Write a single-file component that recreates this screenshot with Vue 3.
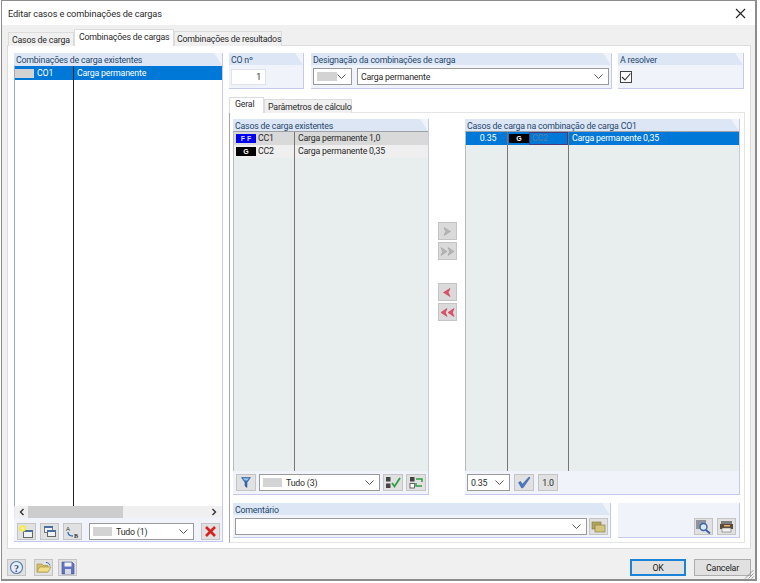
<script setup>
const existing = [
  { badge: 'F F', badgeClass: 'blue', id: 'CC1', name: 'Carga permanente 1,0', rowClass: 'row-a' },
  { badge: 'G', badgeClass: 'black', id: 'CC2', name: 'Carga permanente 0,35', rowClass: 'row-b' },
]
</script>

<template>
  <div class="dialog">
    <div class="titlebar">
      <span>Editar casos e combinações de cargas</span>
      <svg class="close" width="11" height="11" viewBox="0 0 11 11"><path d="M1 1l9 9M10 1l-9 9" stroke="#222" stroke-width="1.1" fill="none"/></svg>
    </div>

    <div class="content">
      <div class="tabs">
        <div class="tab tab-first">Casos de carga</div>
        <div class="tab active">Combinações de cargas</div>
        <div class="tab tab-last">Combinações de resultados</div>
      </div>

      <div class="panel">
        <section class="group left-group">
          <div class="group-head">Combinações de carga existentes</div>
          <div class="list white-list">
            <div class="col col-co">
              <div class="cell sel co-cell"><i class="swatch"></i>CO1</div>
            </div>
            <div class="col col-fill">
              <div class="cell sel">Carga permanente</div>
            </div>
          </div>
          <div class="scrollbar">
            <svg width="6" height="8" viewBox="0 0 6 8"><path d="M4.5 1L1.5 4l3 3" stroke="#333" stroke-width="1.4" fill="none"/></svg>
            <div class="track"><div class="thumb"></div></div>
            <svg width="6" height="8" viewBox="0 0 6 8"><path d="M1.5 1l3 3-3 3" stroke="#333" stroke-width="1.4" fill="none"/></svg>
          </div>
          <div class="toolbar left-tools">
            <button class="btn">
              <svg width="15" height="14" viewBox="0 0 15 14"><rect x="4.500" y="5.500" width="9" height="7" fill="#eef3f8" stroke="#666"/><rect x="4" y="5" width="10" height="2" fill="#4a6f9c"/><circle cx="3.500" cy="3.500" r="3.200" fill="#ffe93a"/><circle cx="3.500" cy="3.500" r="1.400" fill="#fff8b0"/></svg>
            </button>
            <button class="btn">
              <svg width="14" height="13" viewBox="0 0 14 13"><rect x="1.500" y="1.500" width="8" height="6" fill="#eef3f8" stroke="#777"/><rect x="1" y="1" width="9" height="2" fill="#4a6f9c"/><rect x="4.500" y="5.500" width="8" height="6" fill="#eef3f8" stroke="#666"/><rect x="4" y="5" width="9" height="2" fill="#4a6f9c"/></svg>
            </button>
            <button class="btn">
              <svg width="15" height="14" viewBox="0 0 15 14"><text x="1" y="6" font-size="6" font-family="Liberation Sans" fill="#333">A</text><text x="9" y="13" font-size="6" font-weight="700" font-family="Liberation Serif" fill="#333">B</text><path d="M3 7c0 3 2 4 5 4" stroke="#2d6db5" stroke-width="1.3" fill="none"/></svg>
            </button>
            <div class="combo combo-all-left"><i class="swatch wide"></i><span>Tudo (1)</span><svg class="chev" width="9" height="5" viewBox="0 0 9 5"><path d="M.5.5l4 4 4-4" stroke="#555" fill="none"/></svg></div>
            <button class="btn btn-del">
              <svg width="13" height="13" viewBox="0 0 13 13"><path d="M2 2l9 9M11 2l-9 9" stroke="#d62020" stroke-width="2.6" fill="none"/></svg>
            </button>
          </div>
        </section>

        <div class="right">
          <div class="top-row">
            <section class="group g-co">
              <div class="group-head">CO nº</div>
              <div class="group-body"><div class="input-no">1</div></div>
            </section>
            <section class="group g-name">
              <div class="group-head">Designação da combinações de carga</div>
              <div class="group-body">
                <div class="combo combo-swatch"><i class="swatch wide"></i><svg class="chev" width="9" height="5" viewBox="0 0 9 5"><path d="M.5.5l4 4 4-4" stroke="#555" fill="none"/></svg></div>
                <div class="combo combo-name"><span>Carga permanente</span><svg class="chev" width="9" height="5" viewBox="0 0 9 5"><path d="M.5.5l4 4 4-4" stroke="#555" fill="none"/></svg></div>
              </div>
            </section>
            <section class="group g-solve">
              <div class="group-head">A resolver</div>
              <div class="group-body">
                <div class="check"><svg width="10" height="10" viewBox="0 0 10 10"><path d="M1 5l3 3 5.500-6.500" stroke="#333" stroke-width="1.1" fill="none"/></svg></div>
              </div>
            </section>
          </div>

          <div class="inner-tabs">
            <div class="tab active inner-active">Geral</div>
            <div class="tab inner-second">Parâmetros de cálculo</div>
          </div>

          <div class="inner-panel">
            <div class="lists-row">
              <section class="group g-existing">
                <div class="group-head">Casos de carga existentes</div>
                <div class="list">
                  <div class="col col-cc">
                    <div v-for="r in existing" :key="r.id" class="cell" :class="r.rowClass"><i class="badge" :class="r.badgeClass">{{ r.badge }}</i>{{ r.id }}</div>
                  </div>
                  <div class="col col-fill">
                    <div v-for="r in existing" :key="r.id" class="cell" :class="r.rowClass">{{ r.name }}</div>
                  </div>
                </div>
                <div class="toolbar list-tools">
                  <button class="btn">
                    <svg width="10" height="11" viewBox="0 0 10 11"><path d="M.5.500h9L6 5.500v5L4 9V5.500z" fill="#2f6fb8" stroke="#1d4f8c" stroke-width=".5"/><path d="M2 1.200h6L6.400 3.500H3.600z" fill="#9cc4ea"/></svg>
                  </button>
                  <div class="combo combo-all"><i class="swatch wide"></i><span>Tudo (3)</span><svg class="chev" width="9" height="5" viewBox="0 0 9 5"><path d="M.5.5l4 4 4-4" stroke="#555" fill="none"/></svg></div>
                  <button class="btn">
                    <svg width="16" height="13" viewBox="0 0 16 13"><rect x="1" y="1" width="4.500" height="4.500" fill="#444"/><rect x="1" y="7.500" width="4.500" height="4.500" fill="#444"/><path d="M7 7l2.500 3.500L15 2" stroke="#2ea043" stroke-width="1.800" fill="none"/></svg>
                  </button>
                  <button class="btn">
                    <svg width="15" height="13" viewBox="0 0 15 13"><rect x="1" y="1" width="4.500" height="4.500" fill="#444"/><rect x="1" y="7.500" width="4.500" height="4.500" fill="#fff" stroke="#444" stroke-width=".8"/><path d="M7 3h6v3M13 10H7V7" stroke="#2ea043" stroke-width="1.500" fill="none"/></svg>
                  </button>
                </div>
              </section>

              <div class="transfer">
                <button class="btn arrow">
                  <svg width="10" height="9" viewBox="0 0 10 9"><path d="M2 .5l6.500 4-6.500 4 1.800-4z" fill="#b5b5b5" stroke="#9a9a9a" stroke-width=".5"/></svg>
                </button>
                <button class="btn arrow">
                  <svg width="15" height="9" viewBox="0 0 15 9"><path d="M1 .5l6 4-6 4 1.600-4zM8 .5l6 4-6 4 1.600-4z" fill="#b5b5b5" stroke="#9a9a9a" stroke-width=".5"/></svg>
                </button>
                <button class="btn arrow arrow-gap">
                  <svg width="10" height="9" viewBox="0 0 10 9"><path d="M8 .5L1.500 4.500l6.500 4-1.800-4z" fill="#e2506a" stroke="#c02a48" stroke-width=".5"/></svg>
                </button>
                <button class="btn arrow">
                  <svg width="15" height="9" viewBox="0 0 15 9"><path d="M7 .5l-6 4 6 4-1.600-4zM14 .5l-6 4 6 4-1.600-4z" fill="#e2506a" stroke="#c02a48" stroke-width=".5"/></svg>
                </button>
              </div>

              <section class="group g-used">
                <div class="group-head">Casos de carga na combinação de carga CO1</div>
                <div class="list">
                  <div class="col col-factor"><div class="cell sel factor">0.35</div></div>
                  <div class="col col-case">
                    <div class="cell sel case-cell"><i class="badge black small">G</i><span class="cc-edit">CC2</span></div>
                  </div>
                  <div class="col col-fill"><div class="cell sel">Carga permanente 0,35</div></div>
                </div>
                <div class="toolbar used-tools">
                  <div class="combo combo-factor"><span>0.35</span><svg class="chev" width="9" height="5" viewBox="0 0 9 5"><path d="M.5.5l4 4 4-4" stroke="#555" fill="none"/></svg></div>
                  <button class="btn">
                    <svg width="14" height="13" viewBox="0 0 14 13"><path d="M1.500 6.500l2-1 2 2.800L12 1l1 .8-7 10H4.500z" fill="#4a78c8" stroke="#27508f" stroke-width=".5"/></svg>
                  </button>
                  <button class="btn">1.0</button>
                </div>
              </section>
            </div>

            <div class="comment-row">
              <section class="group g-comment">
                <div class="group-head">Comentário</div>
                <div class="group-body">
                  <div class="combo combo-comment"><svg class="chev" width="9" height="5" viewBox="0 0 9 5"><path d="M.5.5l4 4 4-4" stroke="#555" fill="none"/></svg></div>
                  <button class="btn">
                    <svg width="15" height="12" viewBox="0 0 15 12"><rect x="1" y="1" width="9" height="7" fill="#b4a55c" stroke="#7e7440" stroke-width=".6"/><rect x="4" y="4" width="10" height="7" fill="#d3c67c" stroke="#7e7440" stroke-width=".6"/></svg>
                  </button>
                </div>
              </section>
              <section class="g-actions">
                <button class="btn">
                  <svg width="15" height="14" viewBox="0 0 15 14"><rect x="0" y="0" width="10" height="9" fill="#8f949c"/><circle cx="7.500" cy="7" r="3.500" fill="#dbe7f3" stroke="#3c63a8" stroke-width="1.400"/><path d="M10 10l4 3.500" stroke="#3c63a8" stroke-width="2"/></svg>
                </button>
                <button class="btn">
                  <svg width="15" height="13" viewBox="0 0 15 13"><rect x="2" y="1" width="11" height="3" fill="#7d7d7d"/><rect x="1" y="4" width="13" height="5" fill="#5a4a3e"/><rect x="3" y="8" width="9" height="4" fill="#f2f2f2" stroke="#555" stroke-width=".5"/><rect x="5" y="5" width="6" height="1.500" fill="#e3b36a"/></svg>
                </button>
              </section>
            </div>
          </div>
        </div>
      </div>

      <div class="footer">
        <button class="btn">
          <svg width="15" height="15" viewBox="0 0 15 15"><circle cx="7.500" cy="7.500" r="6" fill="#e8eef8" stroke="#5d7fb5" stroke-width="1.200"/><text x="7.500" y="11.500" text-anchor="middle" font-size="10" font-weight="700" font-family="Liberation Serif" fill="#2c4a86">?</text></svg>
        </button>
        <button class="btn btn-open">
          <svg width="16" height="13" viewBox="0 0 16 13"><path d="M1 3h5l1 1.500h5V11H1z" fill="#d8c065" stroke="#a08c3a" stroke-width=".6"/><path d="M1 11l2.500-5H15l-3 5z" fill="#f1dd86" stroke="#a08c3a" stroke-width=".6"/><path d="M10 1.500c2 0 3.500 1 4 3" stroke="#3c63a8" fill="none"/></svg>
        </button>
        <button class="btn">
          <svg width="14" height="14" viewBox="0 0 14 14"><path d="M1 1h10l2 2v10H1z" fill="#6274c0" stroke="#3f4f90" stroke-width=".6"/><rect x="3.500" y="1.500" width="7" height="4" fill="#f2f2f2"/><rect x="4" y="8" width="6" height="5" fill="#d8dbe6"/></svg>
        </button>
        <div class="spacer"></div>
        <button class="dlg-btn ok">OK</button>
        <button class="dlg-btn">Cancelar</button>
        <svg class="grip" width="10" height="10" viewBox="0 0 10 10"><path d="M9.500 1L1 9.500M9.500 4.500L4.500 9.500M9.500 7.500L7.500 9.500" stroke="#999" fill="none"/></svg>
      </div>
    </div>
  </div>
</template>

<style scoped>
.dialog {
  box-sizing: border-box;
  width: 756px;
  height: 581px;
  margin-left: 1px;
  border: 1px solid #8c8c8c;
  border-width: 1px 2px 2px 1px;
  display: flex;
  flex-direction: column;
  font-family: Roboto, "Liberation Sans", Arial, sans-serif;
  font-size: 8.8px;
  letter-spacing: -.2px;
  color: #2a2a2a;
  background: #f0f0f0;
}

.titlebar {
  height: 24px;
  flex: none;
  background: #fff;
  display: flex;
  align-items: center;
  justify-content: space-between;
  padding: 0 6px 0 6px;
  font-size: 9.2px;
  letter-spacing: -.1px;
}

.close {
  margin-right: 3px;
}

.content {
  flex: 1;
  display: flex;
  flex-direction: column;
  padding: 5px 4px 0 5px;
  min-height: 0;
}

.tabs {
  display: flex;
  align-items: flex-end;
  height: 16px;
  flex: none;
  position: relative;
  z-index: 1;
  margin-bottom: -1px;
}

.tab {
  box-sizing: border-box;
  height: 14px;
  line-height: 14px;
  padding: 0 3px;
  background: #f0f0f0;
  border: 1px solid #dcdcdc;
  border-bottom: 0;
  white-space: nowrap;
}

.tab.active {
  background: #fff;
  height: 17px;
  line-height: 15px;
  padding: 0 4px;
}

.tab-first {
  width: 66px;
  margin-left: 1px;
}

.tabs .active {
  width: 100px;
}

.tab-last {
  width: 108px;
  height: 15px;
  padding-left: 2px;
}

.panel {
  flex: 1;
  min-height: 0;
  background: #fff;
  border: 1px solid #dcdcdc;
  padding: 7px 6px 6px 6px;
  display: flex;
  gap: 6px;
}

.group {
  background: #f0f4fa;
  border-right: 1px solid #c6c8ee;
  border-bottom: 1px solid #c6c8ee;
  display: flex;
  flex-direction: column;
  box-sizing: border-box;
}

.group-head {
  height: 12px;
  line-height: 14px;
  flex: none;
  padding-left: 2px;
  background: #dce6f4;
  color: #26476e;
  white-space: nowrap;
  clip-path: polygon(0 0, calc(100% - 8px) 0, 100% 100%, 0 100%);
}

.group-body {
  flex: 1;
  display: flex;
  align-items: center;
  gap: 5px;
  padding: 0 2px;
}

.left-group {
  width: 209px;
  flex: none;
}

.list {
  flex: 1;
  min-height: 0;
  display: flex;
  background: #e8eeee;
  border-left: 1px solid #b8bcc0;
  border-top: 1px solid #9da2a8;
}

.white-list {
  background: #fff;
  border-top: 1px solid #dce6f4;
  border-left: 1px solid #9ea8c0;
}

.col {
  border-right: 1px solid #777;
  box-sizing: border-box;
  flex: none;
}

.col-fill {
  flex: 1;
  border-right: 0;
  min-width: 0;
}

.col-co {
  width: 59px;
  border-right-color: #222;
}

.col-cc {
  width: 61px;
}

.col-factor {
  width: 42px;
}

.col-case {
  width: 61px;
}

.cell {
  height: 13px;
  line-height: 13px;
  padding-left: 3px;
  display: flex;
  align-items: center;
  white-space: nowrap;
}

.white-list .cell {
  height: 14px;
  line-height: 15px;
}

.co-cell {
  padding-left: 0;
}

.sel {
  background: #0078d7;
  color: #fff;
}

.row-a {
  background: #d9d9d9;
}

.row-b {
  background: #efefef;
}

.factor {
  justify-content: center;
}

.swatch {
  display: block;
  width: 19px;
  height: 9px;
  margin-right: 3px;
  background: #d3d3d3;
  flex: none;
}

.swatch.wide {
  margin-right: 4px;
}

.badge {
  box-sizing: border-box;
  width: 20px;
  height: 9px;
  margin-right: 2px;
  flex: none;
  font-family: "Liberation Sans", sans-serif;
  font-style: normal;
  font-weight: 700;
  font-size: 7px;
  letter-spacing: 0;
  line-height: 9px;
  text-align: center;
  color: #fff;
}

.badge.blue {
  background: #0000f0;
  color: #d8d8ff;
}

.badge.black {
  background: #000;
}

.row-a .badge,
.row-b .badge {
  margin-left: -1px;
}

.case-cell {
  padding-left: 1px;
}

.badge.small {
  margin-right: 0;
}

.cc-edit {
  box-sizing: border-box;
  flex: 1;
  height: 13px;
  line-height: 11px;
  padding-left: 2px;
  color: #5a7fa8;
  border: 1px solid #4a3a78;
}

.scrollbar {
  height: 12px;
  flex: none;
  background: #f0f0f0;
  display: flex;
  align-items: center;
  justify-content: space-between;
  padding: 0 5px 0 4px;
  border-left: 1px solid #e4e8f0;
}

.track {
  flex: 1;
  height: 100%;
  margin: 0 3px 0 3px;
}

.thumb {
  width: 95px;
  height: 100%;
  background: #cdcdcd;
}

.toolbar {
  flex: none;
  display: flex;
  align-items: center;
}

.left-tools {
  height: 23px;
  padding-left: 3px;
  padding-bottom: 1px;
  box-sizing: border-box;
  align-items: flex-end;
  gap: 4px;
}

.btn {
  box-sizing: border-box;
  width: 19px;
  height: 17px;
  padding: 0;
  flex: none;
  background: #e1e1e1;
  border: 1px solid #c4c4c4;
  display: flex;
  align-items: center;
  justify-content: center;
  font: inherit;
  letter-spacing: inherit;
  color: inherit;
}

.combo {
  box-sizing: border-box;
  height: 17px;
  flex: none;
  background: #fff;
  border: 1px solid #9a9a9a;
  display: flex;
  align-items: center;
  padding: 0 5px 0 3px;
}

.chev {
  margin-left: auto;
  flex: none;
}

.combo-all-left {
  width: 105px;
  margin: 0 3px;
}

.top-row {
  display: flex;
  height: 36px;
  flex: none;
  gap: 7px;
}

.right {
  flex: 1;
  display: flex;
  flex-direction: column;
  min-width: 0;
  margin-bottom: -1px;
}

.g-co {
  width: 75px;
}

.g-name {
  width: 301px;
}

.g-solve {
  width: 126px;
  margin-left: -1px;
}

.input-no {
  box-sizing: border-box;
  width: 35px;
  height: 16px;
  line-height: 15px;
  text-align: right;
  padding-right: 4px;
  background: #fff;
  border: 1px solid #e0e4ea;
}

.combo-swatch {
  width: 39px;
}

.combo-swatch .swatch {
  margin-right: 0;
  width: 20px;
}

.combo-name {
  width: 252px;
}

.check {
  box-sizing: border-box;
  width: 12px;
  height: 12px;
  margin-top: 1px;
  border: 1px solid #444;
  background: #fff;
  display: flex;
  align-items: center;
  justify-content: center;
}

.inner-tabs {
  display: flex;
  align-items: flex-end;
  height: 16px;
  margin-top: 8px;
  flex: none;
  margin-bottom: -1px;
  position: relative;
  z-index: 1;
}

.tab.inner-active {
  width: 35px;
  height: 16px;
  line-height: 13px;
  padding: 0 0 0 5px;
}

.inner-second {
  width: 88px;
  height: 14px;
}

.inner-panel {
  flex: 1;
  min-height: 0;
  box-sizing: border-box;
  width: 516px;
  background: #fff;
  border: 1px solid #e4e4e4;
  border-left-color: #a6a6a6;
  padding: 6px 4px 4px 3px;
  display: flex;
  flex-direction: column;
}

.lists-row {
  display: flex;
  height: 376px;
  flex: none;
}

.g-existing {
  width: 196px;
  flex: none;
}

.g-used {
  width: 275px;
  flex: none;
}

.transfer {
  width: 36px;
  flex: none;
  display: flex;
  flex-direction: column;
  align-items: center;
  gap: 2px;
  padding-top: 103px;
}

.arrow {
  height: 18px;
  background: #dadada;
}

.arrow-gap {
  margin-top: 21px;
}

.list-tools {
  height: 23px;
  padding-left: 3px;
  gap: 3px;
}

.list-tools .btn,
.used-tools .btn {
  width: 20px;
}

.used-tools {
  height: 23px;
  padding-left: 2px;
  gap: 4px;
}

.combo-all {
  width: 121px;
}

.combo-factor {
  width: 43px;
  padding-left: 3px;
}

.comment-row {
  display: flex;
  gap: 7px;
  margin-top: 8px;
  height: 35px;
  flex: none;
}

.g-comment {
  width: 378px;
}

.g-comment .group-body {
  gap: 2px;
  padding-top: 1px;
}

.combo-comment {
  width: 352px;
}

.g-actions {
  width: 122px;
  box-sizing: border-box;
  background: #f0f4fa;
  border-right: 1px solid #c6c8ee;
  border-bottom: 1px solid #c6c8ee;
  display: flex;
  justify-content: flex-end;
  align-items: flex-end;
  gap: 4px;
  padding: 0 3px 2px 0;
}

.footer {
  flex: none;
  height: 30px;
  display: flex;
  align-items: flex-start;
  padding-top: 10px;
  box-sizing: border-box;
  position: relative;
  gap: 5px;
}

.btn-open {
  margin-left: 3px;
}

.spacer {
  flex: 1;
}

.dlg-btn {
  box-sizing: border-box;
  width: 57px;
  height: 17px;
  padding: 0;
  background: #e1e1e1;
  border: 1px solid #adadad;
  font: inherit;
  letter-spacing: inherit;
  color: #222;
}

.ok {
  width: 56px;
  border: 2px solid #1b84d9;
  margin-right: 3px;
}

.grip {
  position: absolute;
  right: -3px;
  bottom: 0;
}
</style>

<style>
html, body {
  background: #fff;
}
</style>
